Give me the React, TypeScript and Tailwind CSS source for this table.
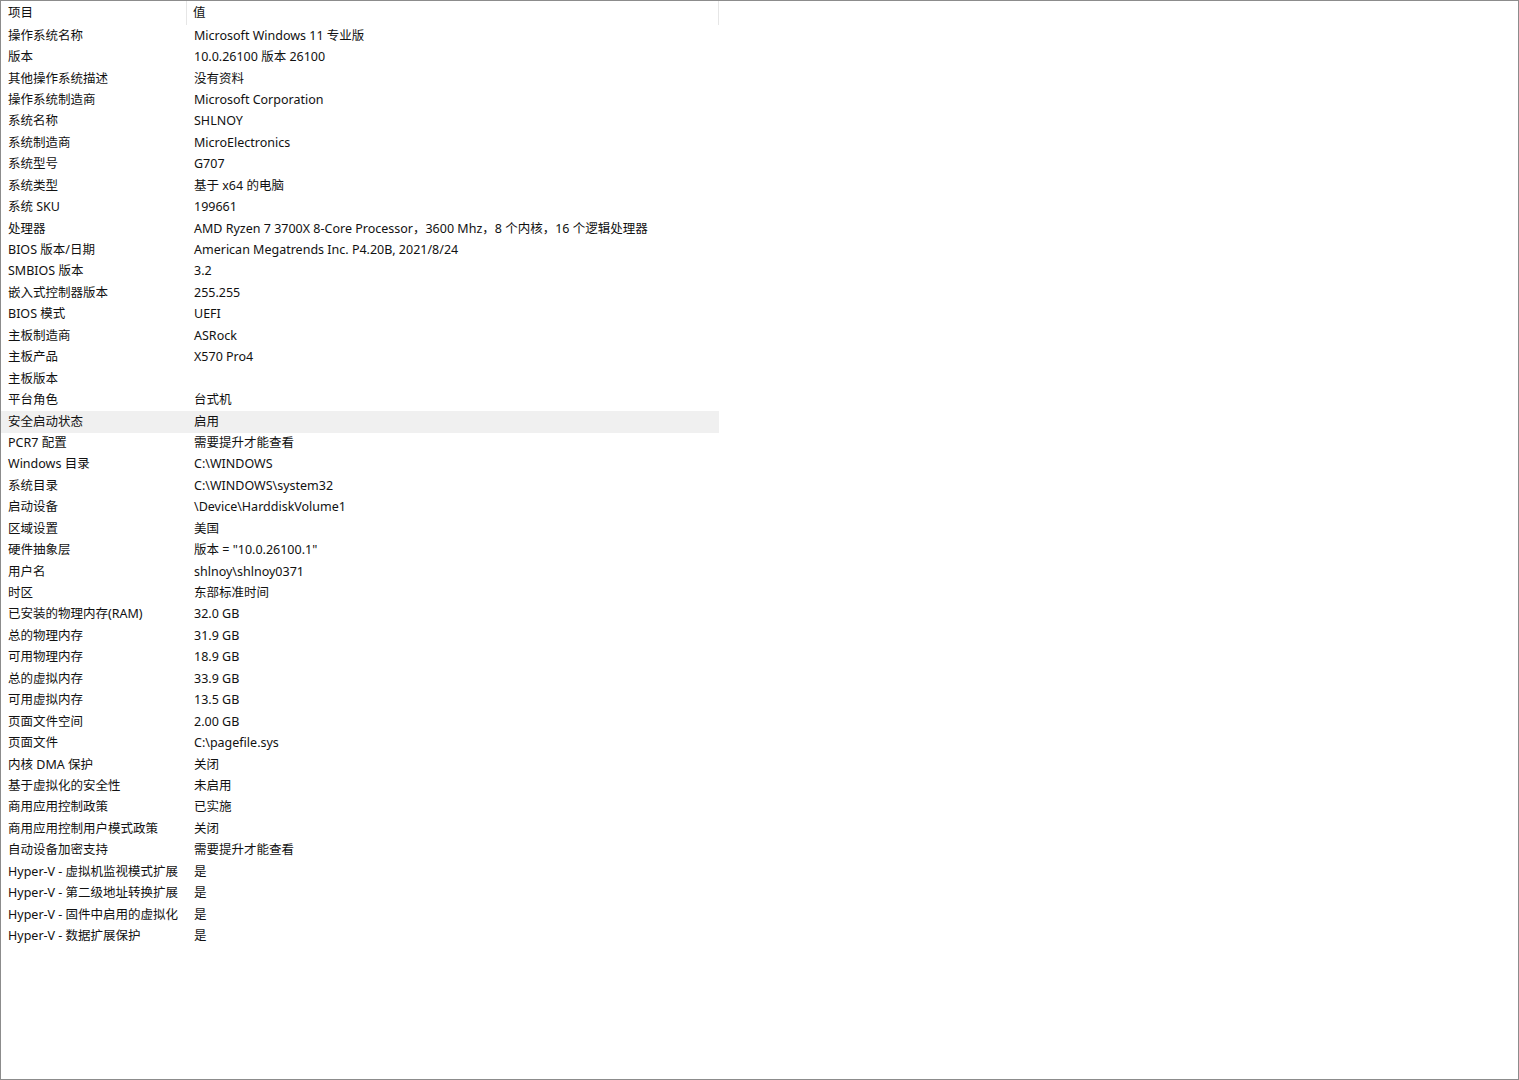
import React from "react";

const rows: [string, string][] = [
  ["操作系统名称", "Microsoft Windows 11 专业版"],
  ["版本", "10.0.26100 版本 26100"],
  ["其他操作系统描述", "没有资料"],
  ["操作系统制造商", "Microsoft Corporation"],
  ["系统名称", "SHLNOY"],
  ["系统制造商", "MicroElectronics"],
  ["系统型号", "G707"],
  ["系统类型", "基于 x64 的电脑"],
  ["系统 SKU", "199661"],
  ["处理器", "AMD Ryzen 7 3700X 8-Core Processor，3600 Mhz，8 个内核，16 个逻辑处理器"],
  ["BIOS 版本/日期", "American Megatrends Inc. P4.20B, 2021/8/24"],
  ["SMBIOS 版本", "3.2"],
  ["嵌入式控制器版本", "255.255"],
  ["BIOS 模式", "UEFI"],
  ["主板制造商", "ASRock"],
  ["主板产品", "X570 Pro4"],
  ["主板版本", ""],
  ["平台角色", "台式机"],
  ["安全启动状态", "启用"],
  ["PCR7 配置", "需要提升才能查看"],
  ["Windows 目录", "C:\\WINDOWS"],
  ["系统目录", "C:\\WINDOWS\\system32"],
  ["启动设备", "\\Device\\HarddiskVolume1"],
  ["区域设置", "美国"],
  ["硬件抽象层", "版本 = \"10.0.26100.1\""],
  ["用户名", "shlnoy\\shlnoy0371"],
  ["时区", "东部标准时间"],
  ["已安装的物理内存(RAM)", "32.0 GB"],
  ["总的物理内存", "31.9 GB"],
  ["可用物理内存", "18.9 GB"],
  ["总的虚拟内存", "33.9 GB"],
  ["可用虚拟内存", "13.5 GB"],
  ["页面文件空间", "2.00 GB"],
  ["页面文件", "C:\\pagefile.sys"],
  ["内核 DMA 保护", "关闭"],
  ["基于虚拟化的安全性", "未启用"],
  ["商用应用控制政策", "已实施"],
  ["商用应用控制用户模式政策", "关闭"],
  ["自动设备加密支持", "需要提升才能查看"],
  ["Hyper-V - 虚拟机监视模式扩展", "是"],
  ["Hyper-V - 第二级地址转换扩展", "是"],
  ["Hyper-V - 固件中启用的虚拟化", "是"],
  ["Hyper-V - 数据扩展保护", "是"],
];

export default function App() {
  return (
    <div
      className="w-[1519px] h-[1080px] bg-white border border-[#8c8c8c] overflow-hidden text-[#111111] text-[12.5px]"
      style={{ fontFamily: '"Noto Sans", "Noto Sans CJK SC", sans-serif' }}
    >
      <div className="w-[718px]">
        <div className="flex h-[24.3px] items-center">
          <div className="w-[186px] h-full flex items-center pl-[7px] border-r border-[#e6e6e6]">项目</div>
          <div className="flex-1 h-full flex items-center pl-[6px] border-r border-[#e6e6e6]">值</div>
        </div>
        {rows.map(([k, v], i) => (
          <div
            key={i}
            className={`flex h-[21.45px] items-center whitespace-nowrap ${i === 18 ? "bg-[#f0f0f0]" : ""}`}
          >
            <div className="w-[186px] pl-[7px] overflow-hidden">{k}</div>
            <div className="flex-1 pl-[7px]">{v}</div>
          </div>
        ))}
      </div>
    </div>
  );
}
